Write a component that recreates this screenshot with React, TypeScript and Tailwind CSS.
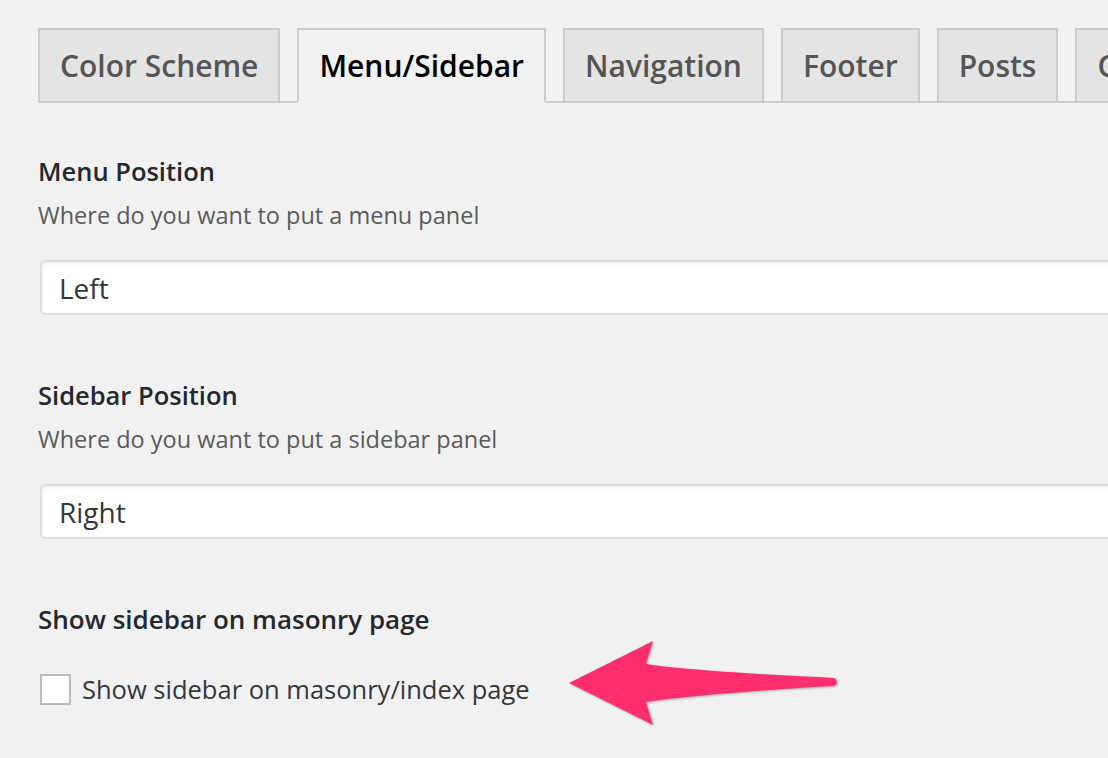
import React from 'react';

const tabs = ['Color Scheme', 'Menu/Sidebar', 'Navigation', 'Footer', 'Posts', 'Comments'];

const Arrow: React.FC = () => (
  <svg
    className="absolute left-[560px] top-[630px] drop-shadow-[1px_1px_1px_rgba(0,0,0,0.3)]"
    width="290"
    height="110"
    viewBox="0 0 290 110"
  >
    <path
      d="M9 53 L93 11 L86 34 C110 38 170 43 273 48 C278 48 278 56 273 56 C170 62 110 68 86 72 L93 95 Z"
      fill="#ff2e6c"
    />
  </svg>
);

const App: React.FC = () => {
  return (
    <div className="relative h-[758px] w-[1108px] overflow-hidden bg-[#f1f1f1] pl-[38px] pt-[28px] font-['Open_Sans',sans-serif]">
      {/* Tabs */}
      <div className="flex w-[1200px] items-end gap-[17px] border-b-2 border-[#ccc]">
        {tabs.map((tab, i) => (
          <div
            key={tab}
            className={`-mb-[2px] whitespace-nowrap border-2 px-5 py-[10px] text-[30px] font-semibold leading-[51px] ${
              i === 1
                ? 'border-[#ccc] border-b-[#f1f1f1] bg-[#f1f1f1] text-black'
                : 'border-[#ccc] bg-[#e4e4e4] text-[#555]'
            }`}
          >
            {tab}
          </div>
        ))}
      </div>

      {/* Menu Position */}
      <div className="mt-[50px] text-[25.5px] font-semibold leading-[36px] text-[#23282d]">Menu Position</div>
      <div className="mt-[8px] text-[23.5px] leading-[36px] text-[#5a5a5a]">Where do you want to put a menu panel</div>
      <div className="ml-[2px] mt-[27px] flex h-[55px] w-[1200px] items-center rounded-[6px] border-2 border-[#ddd] bg-white pl-[17px] text-[28px] text-[#32373c] shadow-[inset_0_2px_4px_rgba(0,0,0,0.07)]">
        Left
      </div>

      {/* Sidebar Position */}
      <div className="mt-[62px] text-[25.5px] font-semibold leading-[36px] text-[#23282d]">Sidebar Position</div>
      <div className="mt-[8px] text-[23.5px] leading-[36px] text-[#5a5a5a]">Where do you want to put a sidebar panel</div>
      <div className="ml-[2px] mt-[27px] flex h-[55px] w-[1200px] items-center rounded-[6px] border-2 border-[#ddd] bg-white pl-[17px] text-[28px] text-[#32373c] shadow-[inset_0_2px_4px_rgba(0,0,0,0.07)]">
        Right
      </div>

      {/* Masonry */}
      <div className="mt-[62px] text-[26px] font-semibold leading-[36px] text-[#23282d]">Show sidebar on masonry page</div>
      <div className="ml-[2px] mt-[34px] flex items-center gap-[11px]">
        <div className="h-[31px] w-[31px] border-2 border-[#bbb] bg-white" />
        <span className="text-[25.5px] leading-[36px] text-[#32373c]">Show sidebar on masonry/index page</span>
      </div>

      <Arrow />
    </div>
  );
};

export default App;
